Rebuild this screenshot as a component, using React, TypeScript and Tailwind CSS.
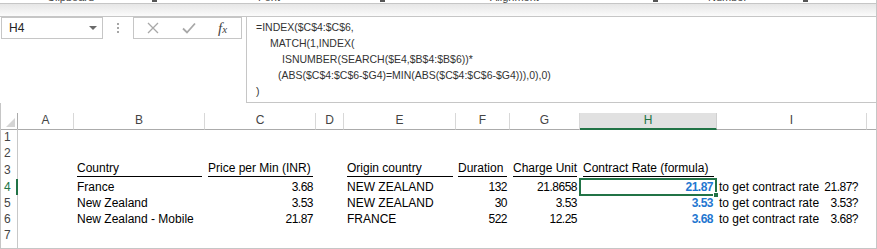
import type { ReactNode } from "react";

const GRID = "grid grid-cols-[17px_56px_131px_111px_28px_112px_54px_70px_137px_150px_1fr]";
const HEAD = ["A", "B", "C", "D", "E", "F", "G", "H", "I"];

const data = [
  { n: 4, b: "France", c: "3.68", e: "NEW ZEALAND", f: "132", g: "21.8658", h: "21.87", i: "21.87?" },
  { n: 5, b: "New Zealand", c: "3.53", e: "NEW ZEALAND", f: "30", g: "3.53", h: "3.53", i: "3.53?" },
  { n: 6, b: "New Zealand - Mobile", c: "21.87", e: "FRANCE", f: "522", g: "12.25", h: "3.68", i: "3.68?" },
];

function RowNum({ n, active }: { n?: number; active?: boolean }) {
  return (
    <div
      className={
        active
          ? "pl-[3px] border-r-2 border-[#217346] text-[#217346]"
          : "pl-[3px] border-r border-[#c8c8c8] text-[#444]"
      }
    >
      {n}
    </div>
  );
}

function Head({ children }: { children: ReactNode }) {
  return (
    <div className="mx-[3px] h-[16px] border-b border-black leading-[15px] whitespace-nowrap">{children}</div>
  );
}

function RibbonLauncher() {
  return <div className="w-[5px] h-[2px] bg-[#555] self-start" />;
}

export default function App() {
  return (
    <div className="w-[877px] h-[249px] overflow-hidden bg-white border-r border-[#c6c6c6] font-['Liberation_Sans',sans-serif] text-[12px] text-black">
      {/* bottom edge of the ribbon, cut off */}
      <div className="h-[3px] overflow-hidden flex items-end text-[11px] leading-[12px] text-[#444] pl-[47px]">
        <div className="w-[105px]">Clipboard</div>
        <RibbonLauncher />
        <div className="w-[101px]" />
        <div className="w-[122px]">Font</div>
        <RibbonLauncher />
        <div className="w-[105px]" />
        <div className="w-[163px]">Alignment</div>
        <RibbonLauncher />
        <div className="w-[50px]" />
        <div className="w-[95px]">Number</div>
        <RibbonLauncher />
      </div>
      <div className="h-[14px] border-y border-[#c6c6c6] bg-gradient-to-b from-[#e6e6e6] to-[#fbfbfb]" />

      {/* formula bar */}
      <div className="flex h-[86px]">
        <div className="ml-[1px] w-[102px] h-[22px] border border-[#c6c6c6] flex items-center justify-between pl-[7px] pr-[5px] text-[#222]">
          <span>H4</span>
          <svg width="8" height="4" viewBox="0 0 8 4">
            <path d="M0 0h8L4 4z" fill="#6a6a6a" />
          </svg>
        </div>
        <div className="w-[30px] h-[22px] flex flex-col items-center justify-center gap-[2px]">
          <span className="w-[2px] h-[2px] bg-[#a6a6a6]" />
          <span className="w-[2px] h-[2px] bg-[#a6a6a6]" />
          <span className="w-[2px] h-[2px] bg-[#a6a6a6]" />
        </div>
        <div className="w-[109px] h-[22px] border border-[#c6c6c6] flex items-center pl-[13px]">
          <svg width="12" height="12" viewBox="0 0 12 12">
            <path d="M1 1l10 10M11 1L1 11" stroke="#a8a8a8" strokeWidth="1.3" />
          </svg>
          <svg width="14" height="12" viewBox="0 0 14 12" className="ml-[23px]">
            <path d="M1 6.5l4 4L13 1.5" stroke="#a8a8a8" strokeWidth="1.8" fill="none" />
          </svg>
          <span className="ml-[22px] italic font-['Liberation_Serif',serif] text-[15px] text-[#444] leading-none">
            f<span className="text-[11px]">x</span>
          </span>
        </div>
        <div className="ml-[4px] flex-1 border-l border-b border-[#c6c6c6] pt-[2px] pl-[9px] text-[10.5px] leading-[16px] text-[#333] whitespace-nowrap">
          <div>=INDEX($C$4:$C$6,</div>
          <div className="pl-[14px]">MATCH(1,INDEX(</div>
          <div className="pl-[26px]">ISNUMBER(SEARCH($E4,$B$4:$B$6))*</div>
          <div className="pl-[22px]">(ABS($C$4:$C$6-$G4)=MIN(ABS($C$4:$C$6-$G4))),0),0)</div>
          <div>)</div>
        </div>
      </div>

      {/* sheet */}
      <div className="h-[146px] border-l border-b border-[#c6c6c6] pt-[10px] flex flex-col">
        <div className={`${GRID} h-[16px] text-[12px] leading-[15px] text-[#444]`}>
          <div className="border-b border-r border-[#ababab] flex items-end justify-end pr-[2px] pb-[2px]">
            <svg width="9" height="9" viewBox="0 0 9 9">
              <path d="M9 0v9H0z" fill="#d4d4d4" />
            </svg>
          </div>
          {HEAD.map((c) =>
            c === "H" ? (
              <div
                key={c}
                className="bg-[#e1e1e1] border-b-2 border-[#217346] border-r border-r-[#d0d0d0] text-center text-[#217346]"
              >
                {c}
              </div>
            ) : (
              <div key={c} className="border-b border-[#ababab] border-r border-r-[#d8d8d8] text-center">
                {c}
              </div>
            )
          )}
          <div className="border-b border-[#ababab]" />
        </div>

        <div className={`${GRID} h-[16px] leading-[16px]`}>
          <RowNum n={1} />
        </div>
        <div className={`${GRID} h-[16px] leading-[16px]`}>
          <RowNum n={2} />
        </div>
        <div className={`${GRID} h-[18px] leading-[18px]`}>
          <RowNum n={3} />
          <div />
          <Head>Country</Head>
          <Head>Price per Min (INR)</Head>
          <div />
          <Head>Origin country</Head>
          <div className="ml-[2px] mr-[3px] h-[16px] border-b border-black leading-[15px]">Duration</div>
          <Head>Charge Unit</Head>
          <Head>Contract Rate (formula)</Head>
          <div />
        </div>

        {data.map((r) => (
          <div key={r.n} className={`${GRID} h-[16px] leading-[16px] whitespace-nowrap`}>
            <RowNum n={r.n} active={r.n === 4} />
            <div />
            <div className="px-[3px]">{r.b}</div>
            <div className="px-[3px] text-right tracking-[-0.5px]">{r.c}</div>
            <div />
            <div className="px-[3px]">{r.e}</div>
            <div className="px-[3px] text-right tracking-[-0.5px]">{r.f}</div>
            <div className="px-[3px] text-right tracking-[-0.5px]">{r.g}</div>
            <div className="relative pr-[4px] text-right font-bold text-[#1f77d0] tracking-[-0.5px]">
              {r.h}
              {r.n === 4 && (
                <>
                  <div className="absolute -left-[1px] -top-[1px] right-0 -bottom-[1px] border-2 border-[#217346]" />
                  <div className="absolute -right-[2px] -bottom-[3px] w-[6px] h-[6px] bg-[#217346] border border-white" />
                </>
              )}
            </div>
            <div className="flex justify-between pl-[2px] pr-[9px]">
              <span>to get contract rate</span>
              <span className="tracking-[-0.5px]">{r.i}</span>
            </div>
          </div>
        ))}

        <div className={`${GRID} h-[16px] leading-[16px]`}>
          <RowNum n={7} />
        </div>
        <div className={`${GRID} flex-1`}>
          <RowNum />
        </div>
      </div>
    </div>
  );
}
